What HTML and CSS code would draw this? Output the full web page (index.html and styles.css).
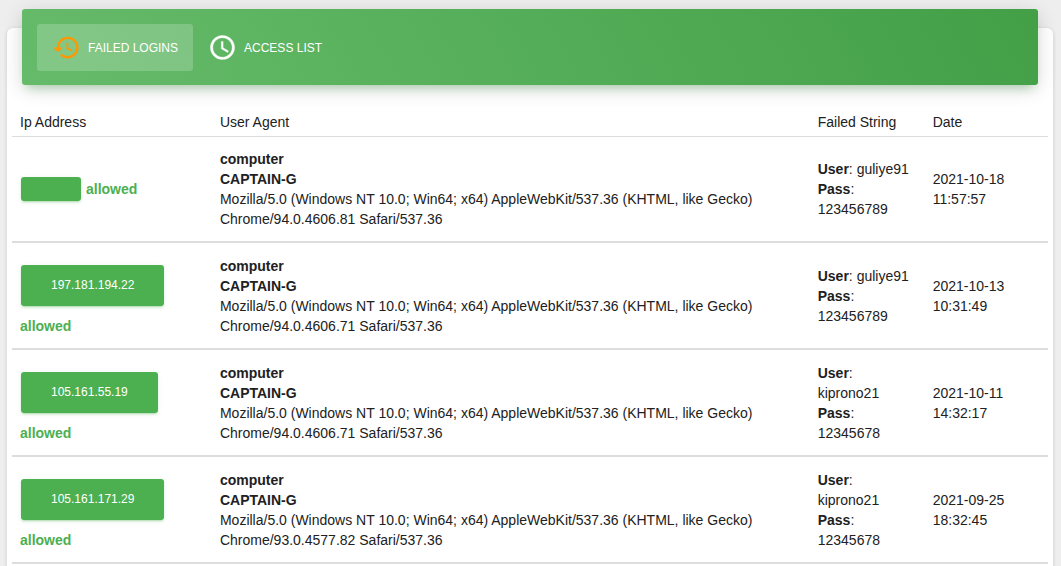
FILE: index.html
```html
<!DOCTYPE html>
<html lang="en">
<head>
<meta charset="utf-8">
<meta name="viewport" content="width=device-width, initial-scale=1">
<title>Failed Logins</title>
<link rel="stylesheet" href="styles.css">
</head>
<body>
<main class="card">
  <nav class="card-header">
    <a class="tab tab-active" href="#failed">
      <svg class="tab-icon icon-history" viewBox="0 0 24 24" aria-hidden="true"><path d="M13 3c-4.970 0-9 4.030-9 9H1l3.890 3.890.07.14L9 12H6c0-3.870 3.130-7 7-7s7 3.130 7 7-3.130 7-7 7c-1.930 0-3.680-.79-4.940-2.060l-1.420 1.420C8.270 19.990 10.510 21 13 21c4.970 0 9-4.030 9-9s-4.030-9-9-9zm-1 5v5l4.280 2.540.72-1.210-3.500-2.080V8H12z"/></svg>
      <span>Failed Logins</span>
    </a>
    <a class="tab" href="#access">
      <svg class="tab-icon icon-clock" viewBox="0 0 24 24" aria-hidden="true"><path d="M11.990 2C6.470 2 2 6.480 2 12s4.470 10 9.990 10C17.520 22 22 17.520 22 12S17.520 2 11.990 2zM12 20c-4.420 0-8-3.580-8-8s3.580-8 8-8 8 3.580 8 8-3.580 8-8 8zm.5-13H11v6l5.250 3.150.75-1.230-4.500-2.670z"/></svg>
      <span>Access List</span>
    </a>
  </nav>
  <table class="logins">
    <colgroup><col class="col-ip"><col class="col-agent"><col class="col-string"><col></colgroup>
    <thead>
      <tr><th>Ip Address</th><th>User Agent</th><th>Failed String</th><th>Date</th></tr>
    </thead>
    <tbody>
      <tr>
        <td><div class="ip"><button class="btn btn-empty" type="button" aria-label="Toggle access"></button><b class="status">allowed</b></div></td>
        <td><b>computer</b><br><b>CAPTAIN-G</b><br>Mozilla/5.0 (Windows NT 10.0; Win64; x64) AppleWebKit/537.36 (KHTML, like Gecko) Chrome/94.0.4606.81 Safari/537.36</td>
        <td><b>User</b>: <span>guliye91</span><br><b>Pass</b>: <span>123456789</span></td>
        <td>2021-10-18 11:57:57</td>
      </tr>
      <tr>
        <td><div class="ip"><button class="btn" type="button">197.181.194.22</button><b class="status">allowed</b></div></td>
        <td><b>computer</b><br><b>CAPTAIN-G</b><br>Mozilla/5.0 (Windows NT 10.0; Win64; x64) AppleWebKit/537.36 (KHTML, like Gecko) Chrome/94.0.4606.71 Safari/537.36</td>
        <td><b>User</b>: <span>guliye91</span><br><b>Pass</b>: <span>123456789</span></td>
        <td>2021-10-13 10:31:49</td>
      </tr>
      <tr>
        <td><div class="ip"><button class="btn" type="button">105.161.55.19</button><b class="status">allowed</b></div></td>
        <td><b>computer</b><br><b>CAPTAIN-G</b><br>Mozilla/5.0 (Windows NT 10.0; Win64; x64) AppleWebKit/537.36 (KHTML, like Gecko) Chrome/94.0.4606.71 Safari/537.36</td>
        <td><b>User</b>: <span>kiprono21</span><br><b>Pass</b>: <span>12345678</span></td>
        <td>2021-10-11 14:32:17</td>
      </tr>
      <tr>
        <td><div class="ip"><button class="btn" type="button">105.161.171.29</button><b class="status">allowed</b></div></td>
        <td><b>computer</b><br><b>CAPTAIN-G</b><br>Mozilla/5.0 (Windows NT 10.0; Win64; x64) AppleWebKit/537.36 (KHTML, like Gecko) Chrome/93.0.4577.82 Safari/537.36</td>
        <td><b>User</b>: <span>kiprono21</span><br><b>Pass</b>: <span>12345678</span></td>
        <td>2021-09-25 18:32:45</td>
      </tr>
    </tbody>
  </table>
</main>
</body>
</html>
```

FILE: styles.css
```css
* {
  box-sizing: border-box;
}

body {
  margin: 0;
  padding: 28px 8px 0 7px;
  background: #eee;
  color: #212121;
  font: 14px/20px "Liberation Sans", Arial, sans-serif;
}

.card {
  display: flow-root;
  padding: 0 5px 12px;
  border-radius: 6px;
  background: #fff;
  box-shadow: 0 1px 4px rgba(0, 0, 0, 0.14);
}

.card-header {
  display: flex;
  margin: -19px 10px 0;
  padding: 15px 15px 14px;
  border-radius: 3px;
  background: linear-gradient(60deg, #66bb6a, #43a047);
  box-shadow: 0 4px 20px rgba(0, 0, 0, 0.14), 0 7px 10px -5px rgba(76, 175, 80, 0.4);
}

.tab {
  display: flex;
  align-items: center;
  gap: 7px;
  padding: 9px 15px;
  border-radius: 3px;
  color: #fff;
  font-size: 12px;
  font-weight: 500;
  text-decoration: none;
  text-transform: uppercase;
}

.tab-active {
  background: rgba(255, 255, 255, 0.2);
}

.tab-icon {
  width: 29px;
  height: 29px;
  fill: currentColor;
}

.icon-history {
  color: #ff9800;
}

.icon-clock {
  stroke: currentColor;
  stroke-width: 0.3;
}

.logins {
  width: 100%;
  margin-top: 19px;
  table-layout: fixed;
  border-collapse: separate;
  border-spacing: 0;
}

.col-ip {
  width: 19.3%;
}

.col-agent {
  width: 57.7%;
}

.col-string {
  width: 11.1%;
}

.logins th {
  padding: 8px 8px 4px;
  border-bottom: 1px solid #ddd;
  font-weight: 400;
  text-align: left;
}

.logins td {
  padding: 13px 8px 12px;
  border-bottom: 2px solid #ddd;
  vertical-align: middle;
}

.logins tbody tr:first-child td {
  padding-top: 12px;
}

.ip {
  display: flex;
  flex-wrap: wrap;
  align-items: center;
  column-gap: 4px;
}

.btn {
  margin: 9px 1px 10px;
  padding: 12px 30px;
  min-height: 41px;
  border: 0;
  border-radius: 3px;
  background: #4caf50;
  box-shadow: 0 2px 2px rgba(76, 175, 80, 0.14), 0 3px 1px -2px rgba(76, 175, 80, 0.2), 0 1px 5px rgba(76, 175, 80, 0.12);
  color: #fff;
  font: 500 12px/17px "Liberation Sans", Arial, sans-serif;
  cursor: pointer;
}

.btn-empty {
  min-height: 24px;
}

.status {
  color: #4caf50;
}
```
